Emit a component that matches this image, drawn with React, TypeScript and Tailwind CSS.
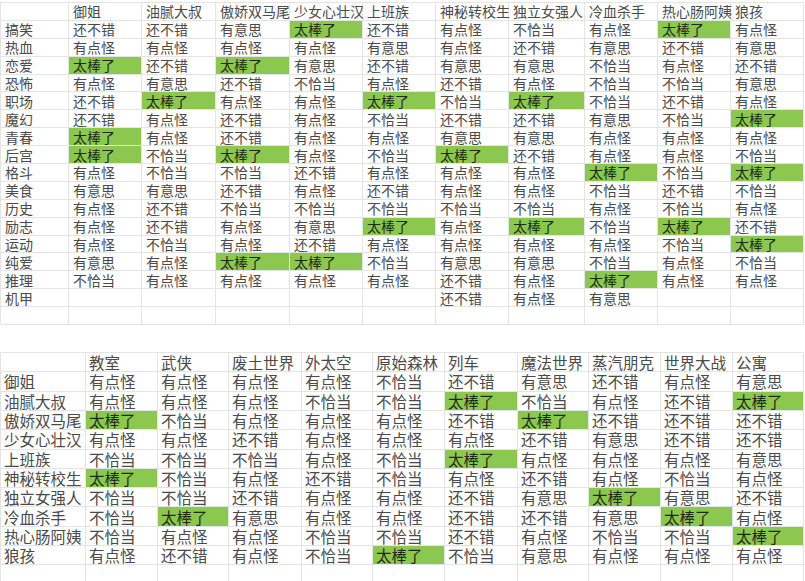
const G = '太棒了';

const topCols = ['御姐', '油腻大叔', '傲娇双马尾', '少女心壮汉', '上班族', '神秘转校生', '独立女强人', '冷血杀手', '热心肠阿姨', '狼孩'];

const topRows: [string, string[]][] = [
  ['搞笑', ['还不错', '还不错', '有意思', G, '还不错', '有点怪', '不恰当', '有点怪', G, '有点怪']],
  ['热血', ['有点怪', '有点怪', '有点怪', '有点怪', '有意思', '有点怪', '还不错', '有意思', '还不错', '有意思']],
  ['恋爱', [G, '还不错', G, '有意思', '还不错', '有意思', '有意思', '不恰当', '有点怪', '还不错']],
  ['恐怖', ['有点怪', '有意思', '还不错', '不恰当', '有点怪', '还不错', '有点怪', '不恰当', '不恰当', '有意思']],
  ['职场', ['还不错', G, '有点怪', '有点怪', G, '不恰当', G, '不恰当', '还不错', '有点怪']],
  ['魔幻', ['还不错', '有点怪', '还不错', '有点怪', '不恰当', '还不错', '还不错', '有意思', '不恰当', G]],
  ['青春', [G, '有点怪', '还不错', '有点怪', '有点怪', '有意思', '有意思', '有点怪', '有点怪', '有点怪']],
  ['后宫', [G, '不恰当', G, '有点怪', '不恰当', G, '还不错', '有点怪', '有点怪', '不恰当']],
  ['格斗', ['有点怪', '不恰当', '不恰当', '还不错', '有点怪', '有点怪', '有点怪', G, '不恰当', G]],
  ['美食', ['有意思', '有意思', '还不错', '有点怪', '还不错', '有点怪', '有点怪', '不恰当', '还不错', '不恰当']],
  ['历史', ['有点怪', '还不错', '不恰当', '不恰当', '不恰当', '不恰当', '不恰当', '有点怪', '不恰当', '有点怪']],
  ['励志', ['有点怪', '还不错', '有点怪', '有意思', G, '有点怪', G, '不恰当', G, '还不错']],
  ['运动', ['有点怪', '不恰当', '有点怪', '还不错', '有点怪', '有点怪', '有点怪', '有点怪', '不恰当', G]],
  ['纯爱', ['有意思', '有点怪', G, G, '不恰当', '有意思', '有意思', '不恰当', '有点怪', '不恰当']],
  ['推理', ['不恰当', '有点怪', '有点怪', '有点怪', '有点怪', '还不错', '有点怪', G, '有点怪', '有点怪']],
  ['机甲', ['', '', '', '', '', '还不错', '有点怪', '有意思', '', '']],
  ['', ['', '', '', '', '', '', '', '', '', '']],
];

const botCols = ['教室', '武侠', '废土世界', '外太空', '原始森林', '列车', '魔法世界', '蒸汽朋克', '世界大战', '公寓'];

const botRows: [string, string[]][] = [
  ['御姐', ['有点怪', '有点怪', '有点怪', '有点怪', '不恰当', '还不错', '有意思', '还不错', '有点怪', '有意思']],
  ['油腻大叔', ['有点怪', '有点怪', '有点怪', '不恰当', '不恰当', G, '不恰当', '有点怪', '还不错', G]],
  ['傲娇双马尾', [G, '不恰当', '有点怪', '有点怪', '有点怪', '还不错', G, '还不错', '还不错', '还不错']],
  ['少女心壮汉', ['有点怪', '有点怪', '还不错', '有点怪', '有点怪', '有点怪', '还不错', '有意思', '还不错', '还不错']],
  ['上班族', ['不恰当', '不恰当', '不恰当', '有点怪', '不恰当', G, '有点怪', '有点怪', '有点怪', '有意思']],
  ['神秘转校生', [G, '不恰当', '有点怪', '还不错', '不恰当', '有点怪', '还不错', '有点怪', '不恰当', '有点怪']],
  ['独立女强人', ['不恰当', '不恰当', '还不错', '有点怪', '有点怪', '还不错', '有意思', G, '有意思', '还不错']],
  ['冷血杀手', ['不恰当', G, '有意思', '有点怪', '有点怪', '还不错', '还不错', '有意思', G, '有点怪']],
  ['热心肠阿姨', ['不恰当', '有点怪', '有点怪', '不恰当', '不恰当', '还不错', '有点怪', '不恰当', '不恰当', G]],
  ['狼孩', ['有点怪', '还不错', '有点怪', '不恰当', G, '不恰当', '有意思', '有点怪', '有点怪', '有点怪']],
  ['', ['', '', '', '', '', '', '', '', '', '']],
];

function Cell({ text, pad }: { text: string; pad: string }) {
  const hit = text === G;
  return (
    <div
      className={`flex items-center whitespace-nowrap border-r border-b border-[#e4e4e4] ${pad} ${
        hit ? 'bg-[#8cc850] text-[#1e2a14]' : 'text-[#4a4a4a]'
      }`}
    >
      {text}
    </div>
  );
}

export default function App() {
  return (
    <div className="w-[805px] h-[581px] overflow-hidden bg-white font-['Noto_Sans_CJK_SC',sans-serif]">
      <div className="pt-[2px]">
        <div className="grid grid-cols-[68px_73px_74px_74px_73px_73px_73px_76px_73px_73px_73px] auto-rows-[17.9px] w-[803px] text-[14px] leading-[16px] border-t border-l border-[#e4e4e4] rounded-b-[3px]">
          <Cell text="" pad="pl-1" />
          {topCols.map((c) => (
            <Cell key={c} text={c} pad="pl-1" />
          ))}
          {topRows.map(([h, vals], i) => (
            <div key={i} className="contents">
              <Cell text={h} pad="pl-1" />
              {vals.map((v, j) => (
                <Cell key={j} text={v} pad="pl-1" />
              ))}
            </div>
          ))}
        </div>
      </div>

      <div className="mt-[27px]">
        <div className="grid grid-cols-[85px_72px_71px_73px_71px_72px_73px_71px_72px_72px_71px] auto-rows-[19.3px] w-[803px] text-[15.5px] leading-[18px] border-t border-l border-[#e4e4e4]">
          <Cell text="" pad="pl-[3px]" />
          {botCols.map((c) => (
            <Cell key={c} text={c} pad="pl-[3px]" />
          ))}
          {botRows.map(([h, vals], i) => (
            <div key={i} className="contents">
              <Cell text={h} pad="pl-[3px]" />
              {vals.map((v, j) => (
                <Cell key={j} text={v} pad="pl-[3px]" />
              ))}
            </div>
          ))}
        </div>
      </div>
    </div>
  );
}
